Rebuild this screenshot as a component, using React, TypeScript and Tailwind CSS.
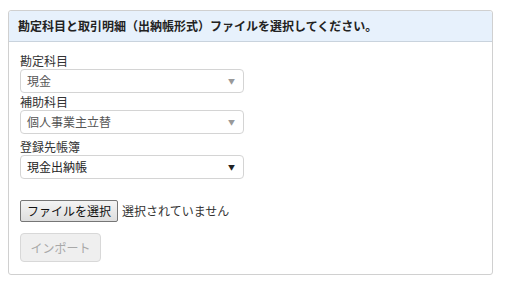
const font = { fontFamily: '"Noto Sans CJK JP", "Noto Sans", sans-serif' };

const fields = [
  { label: "勘定科目", value: "現金", disabled: true },
  { label: "補助科目", value: "個人事業主立替", disabled: true },
  { label: "登録先帳簿", value: "現金出納帳", disabled: false },
];

export default function App() {
  return (
    <div className="h-[287px] w-[505px] bg-white pt-[10px] pl-2 text-[12px] text-[#333]" style={font}>
      <div className="w-[485px] rounded-[3px] border border-[#d0d0d0]">
        <div className="flex h-[31px] items-center rounded-t-[3px] border-b border-[#c9d3dd] bg-[#e7f1fc] px-[9px] font-semibold leading-none text-[#222]">
          勘定科目と取引明細（出納帳形式）ファイルを選択してください。
        </div>
        <div className="px-[11px] pt-[10px] pb-[12px]">
          {fields.map((f, i) => (
            <div key={f.label} className={i === 2 ? "mt-[4px]" : ""}>
              <div className="leading-[17px]">{f.label}</div>
              <div className="flex h-[24px] w-[224px] items-center justify-between rounded-[4px] border border-[#d4d4d4] bg-white pl-[6px] pr-[8px]">
                <span className={f.disabled ? "text-[#555]" : "text-[#222]"}>{f.value}</span>
                <span className={"text-[7px] " + (f.disabled ? "text-[#999]" : "text-[#222]")}>▼</span>
              </div>
            </div>
          ))}
          <div className="mt-[21px] flex items-center">
            <div className="flex h-[22px] items-center rounded-[2px] border border-[#767676] bg-gradient-to-b from-[#f4f4f4] to-[#dedede] px-[6px] text-[12px] text-[#111]">
              ファイルを選択
            </div>
            <span className="ml-[4px] text-[12px] text-[#333]">選択されていません</span>
          </div>
          <div className="mt-[11px] flex h-[29px] w-[81px] items-center justify-center rounded-[4px] border border-[#d8d8d8] bg-[#efefef] text-[12px] text-[#a8a8a8]">
            インポート
          </div>
        </div>
      </div>
    </div>
  );
}
